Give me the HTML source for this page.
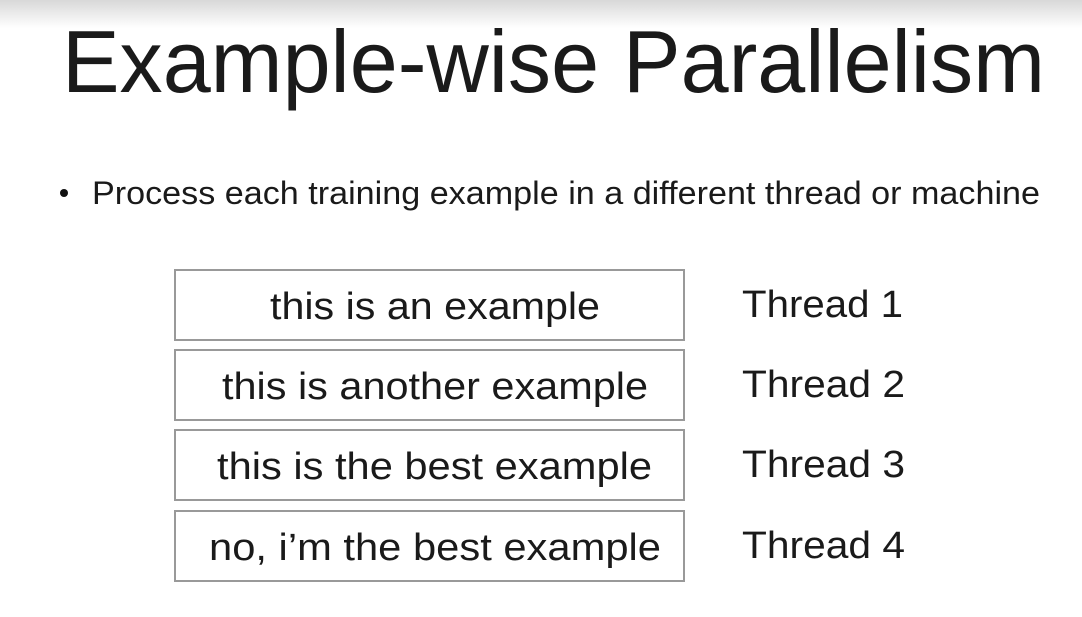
<!DOCTYPE html>
<html><head><style>
html,body{margin:0;padding:0;background:#fff;}
svg{display:block;}
text{font-family:"Liberation Sans",sans-serif;fill:#1a1a1a;}
</style></head><body>
<svg width="1082" height="617" viewBox="0 0 1082 617">
<defs><linearGradient id="g" x1="0" y1="0" x2="0" y2="1"><stop offset="0" stop-color="#d8d8d8"/><stop offset="1" stop-color="#fff"/></linearGradient></defs>
<rect x="0" y="0" width="1082" height="617" fill="#fff"/>
<rect x="0" y="0" width="1082" height="28" fill="url(#g)"/>
<text x="62" y="92" font-size="88" textLength="983" lengthAdjust="spacingAndGlyphs">Example-wise Parallelism</text>
<circle cx="64" cy="193" r="4" fill="#111"/>
<text x="92" y="204" font-size="32" textLength="948" lengthAdjust="spacingAndGlyphs">Process each training example in a different thread or machine</text>
<g fill="#fff" stroke="#999" stroke-width="2">
<rect x="175" y="270" width="509" height="70"/>
<rect x="175" y="350" width="509" height="70"/>
<rect x="175" y="430" width="509" height="70"/>
<rect x="175" y="511" width="509" height="70"/>
</g>
<g font-size="38">
<text x="270" y="319" textLength="330" lengthAdjust="spacingAndGlyphs">this is an example</text>
<text x="222" y="399" textLength="426" lengthAdjust="spacingAndGlyphs">this is another example</text>
<text x="217" y="479" textLength="435" lengthAdjust="spacingAndGlyphs">this is the best example</text>
<text x="209" y="560" textLength="452" lengthAdjust="spacingAndGlyphs">no, i’m the best example</text>
<text x="742" y="317" textLength="161" lengthAdjust="spacingAndGlyphs">Thread 1</text>
<text x="742" y="397" textLength="163" lengthAdjust="spacingAndGlyphs">Thread 2</text>
<text x="742" y="477" textLength="163" lengthAdjust="spacingAndGlyphs">Thread 3</text>
<text x="742" y="558" textLength="163" lengthAdjust="spacingAndGlyphs">Thread 4</text>
</g>
</svg>
</body></html>
